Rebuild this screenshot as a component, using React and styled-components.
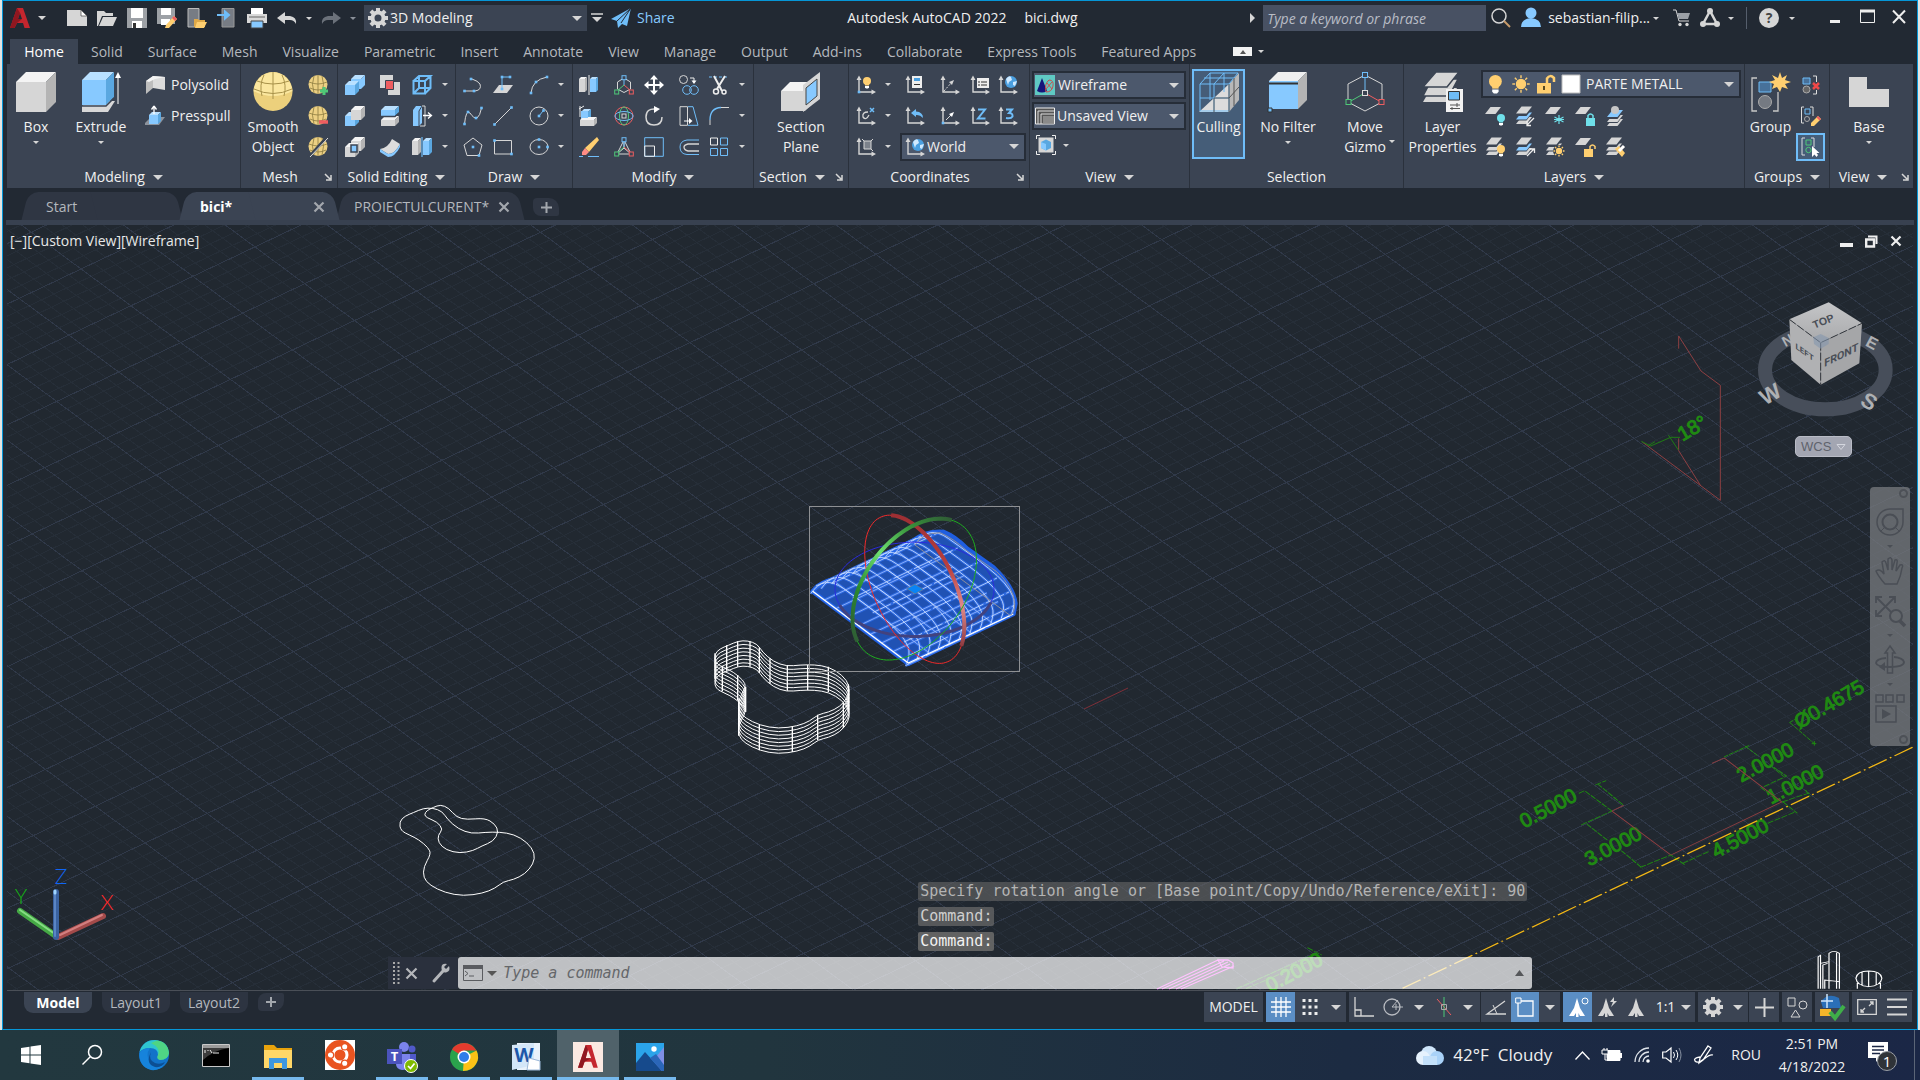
import React from "react";
import styled, { createGlobalStyle, css } from "styled-components";

const C = {
  frame: "#0696d7",
  bg: "#222933",
  panel: "#3b4453",
  field: "#4c586c",
  line: "#262d38",
  text: "#f0f0f0",
  dim: "#b4b8be",
  grey: "#d6d6d6",
  blue: "#87c9ff",
  sky: "#6fbdf8",
  gold: "#ffcf70",
  red: "#ee5d60",
  green: "#4fc878",
  teal: "#6fe0ea",
};

const Global = createGlobalStyle`
  * { box-sizing: border-box; }
  body { margin: 0; background: #e4e5e3; }
  body, button, input, select {
    font-family: "Open Sans", "Noto Sans", sans-serif;
    font-size: 14px;
    line-height: 20px;
    color: ${C.text};
  }
  button, select, input { border: 0; background: none; padding: 0; margin: 0; outline: 0; }
  svg { display: block; flex: none; overflow: visible; }
`;

/* ---------- shared parts ---------- */

const Desktop = styled.div`
  min-height: 100vh;
  display: flex;
  flex-direction: column;
`;
const Window = styled.main`
  flex: 1;
  display: flex;
  flex-direction: column;
  margin: 0 2px;
  border: 1px solid ${C.frame};
  background: ${C.bg};
`;
const Arrow = styled.i`
  flex: none;
  width: 0;
  height: 0;
  border: ${(p) => p.$s || 4}px solid transparent;
  border-top-color: ${(p) => p.$c || C.grey};
  border-bottom: 0;
`;
const Spacer = styled.div`
  flex: 1;
`;
const ArrowButton = styled.button.attrs({ type: "button" })`
  display: flex;
  align-items: center;
  justify-content: center;
  width: ${(p) => p.$w || 20}px;
  height: 20px;
`;
const IconButton = styled.button.attrs({ type: "button" })`
  display: flex;
  align-items: center;
  justify-content: center;
  width: ${(p) => p.$w || 20}px;
  height: ${(p) => p.$h || 20}px;
  ${(p) => p.$on && css`
    border: 2px solid ${C.sky};
    background: #455d78;
  `}
`;
const Drop = ({ label, w, s, c }) => (
  <ArrowButton $w={w} aria-label={label}><Arrow $s={s} $c={c} /></ArrowButton>
);

const Field = styled.label`
  display: flex;
  align-items: center;
  gap: ${(p) => p.$gap || 3}px;
  height: ${(p) => p.$h || 28}px;
  width: ${(p) => p.$w};
  padding: 0 5px 0 ${(p) => p.$pad || 3}px;
  background: ${(p) => (p.$flat ? C.panel : C.field)};
  border: ${(p) => (p.$flat ? 0 : 2)}px solid ${C.line};
`;
const Select = styled.select`
  flex: 1;
  min-width: 0;
  appearance: none;
  color: ${C.text};
`;
const Choice = ({ label, value, children, ...rest }) => (
  <Field {...rest}>
    {children}
    <Select aria-label={label} defaultValue={value}><option>{value}</option></Select>
    <Arrow $s={5} />
  </Field>
);

/* ---------- icons ---------- */

const Ic = ({ s = 20, v = s, w, h, children }) => (
  <svg width={w || s} height={h || s} viewBox={w ? `0 0 ${w} ${h}` : `0 0 ${v} ${v}`} fill="none" aria-hidden="true">{children}</svg>
);
const Dot = ({ x, y, c = C.sky, r = 1.3 }) => <rect x={x - r} y={y - r} width={2 * r} height={2 * r} fill={c} />;
const Axes = () => (
  <g stroke={C.grey} fill={C.grey}>
    <path d="M3 3V17H17" fill="none" strokeWidth="1.4" />
    <path d="M0.5 5L3 0.5L5.5 5ZM15.5 14.5L20 17L15.5 19.5Z" stroke="none" />
  </g>
);
const Layer = ({ x = 0, y = 0, c = C.grey }) => <path transform={`translate(${x} ${y})`} d="M5.5 0H16L10.500 7H0Z" fill={c} />;
const Stack = ({ hi }) => (
  <g>
    <Layer y={11} x={1} c={C.grey} /><Layer y={7.500} x={1} c={C.panel} />
    <Layer y={6.500} x={1} c={hi || C.grey} /><Layer y={3} x={1} c={C.panel} />
    <Layer y={0.5} x={1} />
  </g>
);
const Globe = ({ x = 13, y = 7, r = 6 }) => (
  <g>
    <circle cx={x} cy={y} r={r} fill="#4a9fe0" />
    <path d={`M${x - 5} ${y - 3}q3 -4 5 -2l1 3l-3 2l-1 3zM${x + 2} ${y}l4 -1l-2 5l-2 -1z`} fill="#cfe9ff" />
  </g>
);
const Bulb = ({ x = 0, y = 0, c = C.gold }) => (
  <g transform={`translate(${x} ${y})`}>
    <circle cx="4" cy="4" r="4" fill={c} /><path d="M2 7H6V8.500H2Z" fill={c} /><path d="M2 9H6V10.500L5 11.500H3L2 10.500Z" fill="#fff" />
  </g>
);
const Sun = ({ x, y, r = 3.500 }) => (
  <g stroke={C.gold} strokeWidth="1.4">
    <circle cx={x} cy={y} r={r} fill={C.gold} />
    {[0, 45, 90, 135, 180, 225, 270, 315].map((a) => (
      <path key={a} transform={`rotate(${a} ${x} ${y})`} d={`M${x + r + 1.5} ${y}h${r * 0.6}`} />
    ))}
  </g>
);
const Egg = ({ children }) => (
  <Ic>
    <ellipse cx="10" cy="9.500" rx="9.500" ry="9.500" fill="#ecd083" />
    <path d="M1 7Q10 11 19 7M2 13Q10 17 18 13M10 0V19M6 1Q3 9 6 18M14 1Q17 9 14 18" stroke="#8a7a3f" strokeWidth="0.8" />
    {children}
  </Ic>
);
const Gizmo = ({ tri }) => (
  <Ic>
    {tri ? <path d="M10 3L3 17H17ZM10 3V11L3 17M10 11L17 17" stroke={C.grey} /> : <path d="M10 3L3.500 7V14L10 17.500L16.500 14V7Z" stroke={C.grey} />}
    <path d="M10 4V10" stroke={C.sky} /><path d="M10 10L3 16" stroke={C.green} /><path d="M10 10L17 16" stroke={C.red} />
    <rect x="8" y="0.700" width="4" height="4" stroke={C.sky} fill={C.panel} />
    <rect x="0.700" y="15" width="4" height="4" stroke={C.green} fill={C.panel} />
    <rect x="15.300" y="15" width="4" height="4" stroke={C.red} fill={C.panel} />
  </Ic>
);
const Cube3 = ({ f = C.blue, t = "#b9e0ff", r = "#5aa7e0", x = 0, y = 0, w = 14, h = 12, d = 4 }) => (
  <g transform={`translate(${x} ${y})`}>
    <path d={`M0 ${d}H${w}V${d + h}H0Z`} fill={f} />
    <path d={`M0 ${d}L${d} 0H${w + d}L${w} ${d}Z`} fill={t} />
    <path d={`M${w} ${d}L${w + d} 0V${h}L${w} ${d + h}Z`} fill={r} />
  </g>
);
const white3 = { f: "#d6d6d6", t: "#f4f4f4", r: "#b4b4b4" };

const I = {
  polysolid: <Ic><path d="M1 6L8 1V13L1 19Z" fill="#bdbdbd" /><path d="M8 1L20 2V15L8 13Z" fill="#dcdcdc" /><path d="M1 6L8 1L20 2L10 4L4 7Z" fill="#f4f4f4" /></Ic>,
  presspull: <Ic><path d="M0 17L6 11H20L14 19H0Z" fill="#8d939c" /><Cube3 x={4} y={6} w={9} h={9} d={3} /><path d="M9 8V1M9 0L6.500 3.500M9 0L11.500 3.500" stroke="#fff" strokeWidth="1.3" /></Ic>,
  eggPlus: <Egg><path d="M12 16H20M16 12V20" stroke={C.green} strokeWidth="3" /></Egg>,
  eggMinus: <Egg><path d="M11 16H20" stroke={C.red} strokeWidth="3.500" /></Egg>,
  eggCut: <Egg><path d="M19 0L1 20" stroke="#3b4453" strokeWidth="3" /><path d="M20 1L2 20" stroke="#ddd" /></Egg>,
  union: <Ic><Cube3 x={6} y={0} w={10} h={10} r="#87c9ff" /><Cube3 x={0} y={6} w={10} h={10} /></Ic>,
  subtract: <Ic><Cube3 x={0} y={6} w={10} h={10} /><Cube3 x={6} y={0} w={10} h={10} {...white3} /></Ic>,
  intersect: <Ic><Cube3 x={6} y={0} w={10} h={10} {...white3} /><Cube3 x={0} y={6} w={10} h={10} {...white3} /><path d="M6 8H12V15H6Z" fill={C.blue} stroke={C.panel} strokeWidth="1.500" /></Ic>,
  interfere: <Ic><path d="M0 0H13V13H0Z" fill={C.grey} /><path d="M8 7H20V20H8Z" fill={C.grey} /><path d="M5.500 5.500H13.500V14.500H5.500Z" fill={C.red} stroke={C.panel} /></Ic>,
  slice: <Ic><Cube3 x={1} y={0} w={14} h={6} /><Cube3 x={1} y={10} w={14} h={6} {...white3} /><path d="M1 10.500H15L19 7" stroke={C.panel} strokeWidth="1.300" /></Ic>,
  thicken: <Ic><path d="M0 12Q8 11 12 2L20 7Q15 17 8 17Z" fill="#dcdcdc" /><path d="M0 12L8 17V20L0 15ZM8 17Q15 17 20 7V10Q15 20 8 20Z" fill={C.blue} /></Ic>,
  edges: <Ic><path d="M1.500 6H13V18.500H1.500ZM1.500 6L7 1H18.500L13 6M18.500 1V13L13 18.500M7 1V13H18M7 13L2 18" stroke={C.sky} strokeWidth="2" /></Ic>,
  taper: <Ic><path d="M1 4L4 0H10V17L7 20H1Z" fill={C.blue} /><path d="M7 5V20M7 5L10 0" stroke={C.panel} /><path d="M10 0H13V20H8" stroke={C.grey} /><path d="M11 9.500H19M16 6.500L19.500 9.500L16 12.500" stroke="#fff" strokeWidth="1.3" /></Ic>,
  shell: <Ic><Cube3 x={0} y={1} w={6} h={14} d={3} {...white3} /><Cube3 x={11} y={1} w={6} h={14} d={3} /><path d="M10 0V20" stroke={C.sky} strokeWidth="1.200" /></Ic>,
  polyline: <Ic><path d="M1 16H12Q19 15 17 9Q15 6 9 4" stroke={C.grey} /><Dot x={1.500} y={16} /><Dot x={11} y={16} /><Dot x={8} y={4} /></Ic>,
  path3d: <Ic><path d="M6 10H20L14 18H0Z" fill={C.grey} /><path d="M9 14V2H16" stroke={C.sky} /><Dot x={9} y={14} /><Dot x={9} y={2} /><Dot x={17} y={2} /></Ic>,
  arc: <Ic><path d="M2 18Q3 5 18 2" stroke={C.grey} /><Dot x={2} y={18} /><Dot x={7} y={7} /><Dot x={18} y={2} /></Ic>,
  spline: <Ic><path d="M1.500 18Q3 3 7 7Q11 13 14 12Q17 10 18.500 2" stroke={C.grey} /><Dot x={1.500} y={18} /><Dot x={5} y={6} /><Dot x={13} y={12} /><Dot x={18.500} y={2} /></Ic>,
  line: <Ic><path d="M1.500 18.500L18.500 1.500" stroke={C.grey} /><Dot x={1.500} y={18.500} /><Dot x={18.500} y={1.500} /></Ic>,
  circle: <Ic><circle cx="10" cy="10" r="9" stroke={C.grey} /><path d="M10 10L14 5" stroke={C.sky} /><Dot x={10} y={10} /><Dot x={14.500} y={4.500} /></Ic>,
  polygon: <Ic><path d="M10 1L19 8L16 18.500H4L1 8Z" stroke={C.grey} /><Dot x={10} y={10} /><Dot x={16} y={18.500} /></Ic>,
  rect: <Ic><path d="M1.500 3.500H18.500V17H1.500Z" stroke={C.grey} /><Dot x={1.500} y={3.500} /><Dot x={18.500} y={17} /></Ic>,
  ellipse: <Ic><ellipse cx="10" cy="10" rx="9" ry="7.500" stroke={C.grey} /><Dot x={10} y={10} /><Dot x={18.500} y={10} /><Dot x={10} y={2.500} /></Ic>,
  mirror3d: <Ic><Cube3 x={0} y={2} w={6} h={13} d={2} {...white3} /><Cube3 x={11} y={2} w={6} h={13} d={2} /><path d="M10 0V20" stroke="#eee" /></Ic>,
  align3d: <Ic><Cube3 x={2} y={3} w={7} h={8} d={3} /><Cube3 x={1} y={11} w={14} h={6} d={3} {...white3} /><path d="M2 5H9V12H2Z" fill={C.blue} /><path d="M1 11V0M0 3L5 0" stroke="#eee" /></Ic>,
  erase: <Ic><path d="M18 0L20 3L10 15L6 11Z" fill={C.gold} /><path d="M6 11L10 15L7 18H3L3 15Z" fill="#ff8d85" /><path d="M0 19.500H4M9 19.500H20" stroke={C.sky} /></Ic>,
  sphere: <Ic><circle cx="10" cy="10" r="9" stroke={C.red} /><ellipse cx="10" cy="10" rx="4.500" ry="9" stroke={C.green} /><ellipse cx="10" cy="10" rx="9" ry="4.500" stroke={C.sky} /><rect x="8" y="8" width="4" height="4" stroke={C.grey} /></Ic>,
  move: <Ic><path d="M10 2V18M2 10H18" stroke="#fff" strokeWidth="2" /><path d="M10 0L6 4.500H14ZM10 20L6 15.500H14ZM0 10L4.500 6V14ZM20 10L15.500 6V14Z" fill="#fff" /></Ic>,
  rotate: <Ic><path d="M12 3Q2 2 2 11Q2 19 10 19Q18 19 18 11" stroke={C.grey} strokeWidth="1.500" /><path d="M10 0L16 3L10 7Z" fill="#fff" /></Ic>,
  scale: <Ic><path d="M0.700 0.700H19.300V19.300H0.700Z" stroke={C.sky} /><path d="M0.700 9H10.500V19.300H0.700Z" stroke="#eee" /></Ic>,
  copy: <Ic><circle cx="4.500" cy="4.500" r="4" stroke={C.grey} /><circle cx="8" cy="15" r="4.300" stroke={C.sky} /><circle cx="15" cy="15" r="4.300" stroke={C.sky} /><path d="M11 3H15V6" stroke="#eee" /><path d="M12.500 5.500H17.500L15 9Z" fill="#fff" /></Ic>,
  stretch: <Ic><path d="M1 0.700H8.500V19.300H1Z" stroke={C.grey} /><path d="M9 0.700H14L19 19.300H9" stroke={C.sky} /><path d="M5 15H11" stroke="#fff" /><path d="M10 12L13.500 15L10 18Z" fill="#fff" /></Ic>,
  offset: <Ic><path d="M20 3H8Q1 4 1 10Q1 17 8 17.500H20" stroke={C.sky} /><path d="M20 7H9Q5 8 5 10Q5 13 9 14H20" stroke={C.grey} strokeWidth="1.300" /></Ic>,
  trim: <Ic><path d="M0 2H20" stroke={C.sky} strokeDasharray="3 2" /><path d="M5 1L13 16M16 1L8 14" stroke="#eee" strokeWidth="2" /><circle cx="7" cy="16.500" r="2.500" stroke="#eee" strokeWidth="1.500" /><circle cx="15" cy="17" r="2" stroke="#eee" strokeWidth="1.500" /></Ic>,
  fillet: <Ic><path d="M1 19V14" stroke={C.grey} /><path d="M1 14Q1 2 12 1.500" stroke={C.sky} strokeWidth="1.300" /><path d="M12 1.500H20" stroke={C.grey} /></Ic>,
  array: <Ic><g stroke={C.sky}><path d="M11.500 1H18.500V8H11.500ZM1.500 11.500H8.500V18.500H1.500ZM11.500 11.500H18.500V18.500H11.500Z" /><path d="M1.500 1H8.500V8H1.500Z" stroke="#eee" /></g></Ic>,
  ucsBulb: <Ic><Axes /><Bulb x={7} y={2} /><Dot x={3} y={17} /></Ic>,
  ucsRot: <Ic><Axes /><path d="M12 6Q6 6 7 11Q10 15 13 9" stroke={C.grey} strokeWidth="1.300" /><path d="M14 2L18 6M18 2L14 6" stroke={C.sky} strokeWidth="1.500" /></Ic>,
  ucsFace: <Ic><Axes /><path d="M8 4H15V12H8Z" fill="#7c828b" stroke={C.grey} /><path d="M6 2L8 4M17 2L15 4M17 14L15 12" stroke={C.grey} /></Ic>,
  ucsPanel: <Ic><Axes /><path d="M7 1H17V13H7Z" fill="#eee" /><path d="M9 3H15V6H9Z" fill="#4a9fe0" /><path d="M9 9.500H15" stroke="#333" /></Ic>,
  ucsVec: <Ic><Axes /><path d="M4 16L12 7" stroke={C.grey} strokeDasharray="2 1.500" /><path d="M14 5L9 7L12 10Z" fill={C.grey} /></Ic>,
  ucsVec2: <Ic><Axes /><Dot x={3} y={17} /><path d="M6 14L12 8" stroke={C.grey} /><path d="M14 6L9 8L12 11Z" fill="#fff" /></Ic>,
  ucsList: <Ic><Axes /><path d="M7 3H19V13H7Z" fill="#eee" /><path d="M8 7H10M11 7H17M8 10H10M11 10H17" stroke="#333" /></Ic>,
  ucsGlobe: <Ic><Axes /><Globe /></Ic>,
  ucsPrev: <Ic><Axes /><path d="M6 7L11 3V5.500Q18 6 18 12Q15 8.500 11 9V11Z" fill={C.sky} /></Ic>,
  ucsZ: <Ic><Axes /><path d="M8 3.500H15L8 12.500H15.500" stroke={C.sky} strokeWidth="2" /></Ic>,
  ucs3: <Ic><Axes /><path d="M8 3.500H14L11 7Q15 7 14.500 10.500Q13 13 8 12" stroke={C.sky} strokeWidth="2" /></Ic>,
  world: <Ic><Axes /><Globe x={13} y={8} /></Ic>,
  wire: <Ic><path d="M0 0H20V20H0Z" fill="#5fc9c3" /><path d="M7 3L12 16Q7 19 2 16Z" fill="#15157a" /><path d="M11 17Q9 9 14 5Q19 5 18 11Q17 17 11 17M12 8L17 14M17 7L11 14" stroke="#c85050" /></Ic>,
  unsaved: <Ic><path d="M0.500 2H19.500V18H0.500Z" stroke="#eee" fill="#555" /><path d="M3 18V5H19M6 18V8H19" stroke="#ddd" /><path d="M8 10H19V17.500H8Z" fill="#8a8a8a" /></Ic>,
  viewCube: <Ic><path d="M2.500 2.500H17.500V17.500H2.500Z" fill={C.grey} /><path d="M0.500 4V0.500H4M16 0.500H19.500V4M19.500 16V19.500H16M4 19.500H0.500V16" stroke="#eee" /><path d="M10 4.500L15 7V13L10 15.500L5 13V7Z" fill="#5aa7e0" /><path d="M5 7L10 9V15.500L5 13Z" fill={C.blue} /></Ic>,
  lyOff: <Ic><Layer y={1} /><Bulb x={12} y={8} c={C.teal} /></Ic>,
  lyIso: <Ic><Stack hi={C.blue} /><path d="M19 12L12 19M12 15V19.500H16" stroke="#eee" strokeWidth="1.300" /></Ic>,
  lyFreeze: <Ic><Layer y={1} /><path d="M14 9V18M9.500 11L18.500 16M18.500 11L9.500 16M9 13.500H19" stroke={C.teal} strokeWidth="1.200" /></Ic>,
  lyLock: <Ic><Layer y={1} /><path d="M11 12H20V20H11Z" fill={C.teal} /><path d="M13 12V9.500Q15.500 6.500 18 9.500V12" stroke={C.teal} strokeWidth="1.500" /></Ic>,
  lyCur: <Ic><Layer x={2} y={13} /><Layer x={2} y={10} c={C.panel} /><Layer x={2} y={9} /><Layer x={2} y={6} c={C.panel} /><Layer x={2} y={4} c={C.blue} /><circle cx="10" cy="4" r="4" fill="#c6c6c6" /></Ic>,
  lyOn: <Ic><Stack /><Bulb x={12} y={8} /></Ic>,
  lyUniso: <Ic><Stack hi={C.blue} /><path d="M12 19L19 12M15 12H19.500V16" stroke="#eee" strokeWidth="1.300" /></Ic>,
  lyThaw: <Ic><Stack /><circle cx="14" cy="14" r="6" fill={C.panel} /><Sun x={14} y={14} r={2.500} /></Ic>,
  lyUnlock: <Ic><Layer y={1} /><path d="M9 12H18V20H9Z" fill={C.gold} /><path d="M15 12V9.500Q17.500 6.500 20 9.500V12" stroke={C.gold} strokeWidth="1.500" /></Ic>,
  lyMatch: <Ic><Stack /><path d="M10 12L14 9L20 16L17 20Z" fill={C.gold} /><path d="M14 14L19 9" stroke="#fff" strokeWidth="3" /></Ic>,
  bulb: <Ic><g transform="translate(3 1) scale(1.600)"><Bulb /></g></Ic>,
  sun: <Ic><Sun x={10} y={10} r={4.500} /></Ic>,
  unlock: <Ic><path d="M1 9H15V19.500H1Z" fill={C.gold} /><path d="M11 9V4.500Q14 0 18 4V8" stroke={C.gold} strokeWidth="2.500" /><path d="M8 12V16" stroke="#5a4a20" strokeWidth="2" /></Ic>,
  swatch: <Ic><path d="M1 1H19V19H1Z" fill="#fff" stroke="#bbb" /></Ic>,
  ungroup: <Ic><path d="M2 3H9V9H2Z" stroke={C.sky} fill="#48719a" /><circle cx="5.500" cy="14.500" r="3.500" stroke="#aaa" fill="#666" /><path d="M12 1H15.500V7M15.500 15V19H12" stroke="#ddd" /><path d="M12 8L18 14M18 8L12 14" stroke="#f04848" strokeWidth="2.500" /></Ic>,
  groupEdit: <Ic><path d="M3 1H0.500V17H3M9 1H12V10" stroke="#ddd" /><path d="M4 3H9V8H4Z" stroke={C.sky} /><circle cx="6" cy="13" r="2.500" stroke="#aaa" /><path d="M17 10L20 13L13 20L10 20L10 17Z" fill={C.gold} /><path d="M17 10L20 13L18.500 14.500L15.500 11.500Z" fill={C.red} /></Ic>,
  groupSel: <Ic><path d="M4 1H1V18H4M10 1H13V10" stroke="#ddd" /><path d="M5 3H10V8H5Z" stroke={C.green} /><circle cx="7.500" cy="13" r="2.700" stroke={C.green} /><path d="M11 9V20L13.500 17.500L15.500 20L17 18L15.500 16H18.500Z" fill="#fff" /></Ic>,
};

const Big = {
  box: <Ic s={40}><Cube3 w={30} h={30} d={10} {...white3} /></Ic>,
  extrude: <Ic s={40}><path d="M1 34L8 29H34L27 40H1Z" fill="#d8d8d8" /><Cube3 x={1} w={24} h={25} d={8} /><path d="M1 34H25L33 26" stroke={C.panel} strokeWidth="1.500" /><path d="M37 32V3" stroke="#fff" /><path d="M37 0L34 6H40Z" fill="#fff" /></Ic>,
  egg: <Ic s={40}><ellipse cx="20" cy="19.500" rx="19.500" ry="19.500" fill="#ecd07c" /><path d="M0.500 19Q3 2 20 0Q37 2 39.500 19Q30 24 20 24Q10 24 0.500 19Z" fill="#fbe79f" /><path d="M1 17Q20 26 39 17M4 9Q20 15 36 9M20 0V27M11 3Q6 13 9 24M29 3Q34 13 31 24" stroke="#a8924a" /></Ic>,
  section: <Ic s={40}><Cube3 x={0} y={10} w={24} h={20} d={9} {...white3} /><path d="M22 13L39 0V27L22 40Z" fill={C.grey} /><path d="M25 16L36 7V24L25 33Z" fill={C.blue} stroke="#444" /></Ic>,
  culling: <Ic s={40}><path d="M0 40L30 12V40Z" fill="#dcdcdc" /><path d="M30 12L40 1V28L30 40Z" fill="#b8b8b8" /><path d="M1 12H30V39H1ZM1 12L11 1H39L30 12M11 1V28M1 26H30M15 12V39M15 12L25 1M25 1V20M5 6H35" stroke={C.sky} /><path d="M15 26V40M15 26H30M30 12V40M30 26L40 15M35 6V34" stroke="#555" /></Ic>,
  filter: <Ic s={40}><Cube3 x={1} y={0} w={29} h={28} d={9} t="#efefef" r="#b4b4b4" f={C.blue} /><path d="M1 11.500H30" stroke="#333" strokeWidth="2" /><path d="M0 36H4V40H0Z" fill={C.sky} stroke="#333" /></Ic>,
  gizmo: <Ic s={40}><path d="M20 3L37 12V30L20 39L3 30V12Z" stroke={C.grey} /><path d="M20 4V20" stroke={C.sky} /><path d="M20 21L4 30" stroke={C.green} /><path d="M20 21L36 30" stroke={C.red} /><g fill={C.panel}><rect x="17.500" y="0.500" width="5" height="5" stroke={C.sky} /><rect x="17.500" y="18.500" width="5" height="5" stroke="#ddd" /><rect x="1" y="27.500" width="5" height="5" stroke={C.green} /><rect x="34" y="27.500" width="5" height="5" stroke={C.red} /></g></Ic>,
  layers: <Ic s={40}><g fill={C.grey}><path d="M8 16H34L26 30H0Z" /><path d="M9 7H35L26 24H0Z" stroke={C.panel} strokeWidth="1.500" /><path d="M13 0H36L24 15H0Z" stroke={C.panel} strokeWidth="1.500" /></g><path d="M23 17H40V40H23Z" fill="#f2f2f2" /><path d="M25.500 19.500H36.500V28H25.500Z" fill={C.sky} stroke="#333" /><path d="M27 33H37M27 36.500H37M34 31V35M29 35V38" stroke="#555" /></Ic>,
  group: <Ic s={40}><path d="M6 6H1V39H6M22 39H27V20" stroke="#c8c8c8" strokeWidth="1.300" /><path d="M8 10H20V20H8Z" fill="#47719a" stroke={C.sky} /><circle cx="14" cy="30" r="6.500" fill="#757a82" stroke="#aaa" /><path d="M29 0L31 6L36 3L34 8L40 10L34 12L37 17L31 15L29 20L26 15L21 17L23 12L18 10L24 8L21 3L27 6Z" fill={C.gold} /></Ic>,
  base: <Ic s={40}><path d="M0 5H18V17H40V35H0Z" fill={C.grey} /></Ic>,
};

/* ---------- title bar ---------- */

const TitleBar = styled.header`
  display: flex;
  align-items: center;
  height: 38px;
  padding: 0 8px 4px 7px;
`;
const Cluster = styled.div`
  display: flex;
  align-items: center;
  gap: ${(p) => p.$gap || 0}px;
  margin-left: ${(p) => p.$ml || 0}px;
`;
const AppTitle = styled.h1`
  flex: 1;
  margin: 0;
  display: flex;
  justify-content: center;
  gap: 18px;
  font-size: 14px;
  font-weight: 400;
`;
const ShareLink = styled.a`
  display: flex;
  align-items: center;
  gap: 6px;
  margin-left: 8px;
  color: ${C.blue};
  text-decoration: none;
`;
const SearchBox = styled.input`
  width: 223px;
  height: 26px;
  padding: 0 4px;
  background: #485163;
  color: ${C.text};
  &::placeholder { color: #b9bdc6; font-style: italic; font-size: 14px; opacity: 1; }
`;
const Divider = styled.i`
  width: 1px;
  height: 22px;
  background: #555e6c;
`;
const UserButton = styled.button.attrs({ type: "button" })`
  display: flex;
  align-items: center;
  gap: 7px;
`;

const LogoA = ({ s = 20 }) => (
  <svg width={s} height={s} viewBox="0 0 20 20" aria-hidden="true">
    <path d="M7 0H13L20 20H14.500L13 15H7L4.500 20H0Z M10 5L8 11H12Z" fill="#c4262e" fillRule="evenodd" />
    <path d="M7 0L0 20H4.500L7 15L12 11H8L10 5Z" fill="#8f1720" />
  </svg>
);
const Q = {
  new: <Ic><path d="M0 2H14L20 8V18H0Z" fill={C.grey} /><path d="M14 2V8H20Z" fill="#fff" stroke="#444" strokeWidth="0.700" /></Ic>,
  open: <Ic><path d="M0 3H7L9 5H16V8H5L1 18H0Z" fill={C.grey} /><path d="M6 9H20L16 18H2Z" fill={C.grey} /></Ic>,
  save: <Ic><path d="M0 0H20V20H0Z" fill="#9da1a6" /><path d="M4 0H16V10H4ZM5 13H15V20H5Z" fill="#fff" /><path d="M6 15H9V20H6Z" fill="#333" /></Ic>,
  saveAs: <Ic><path d="M0 0H18V16H0Z" fill="#9da1a6" /><path d="M4 0H14V7H4ZM4 11H13V17H4Z" fill="#fff" /><path d="M17 8L20 11L12 20L8 20L9 17Z" fill={C.gold} /><path d="M17 8L20 11L18 13L15 10Z" fill={C.red} /></Ic>,
  mobOpen: <Ic><path d="M1 0.500H12V19H1Z" fill="#777c84" stroke="#bbb" /><path d="M7 11H11L12 12H18V19H7Z" fill="#e0a948" /><path d="M10 14H20L17 20H8Z" fill={C.gold} /></Ic>,
  mobSave: <Ic><path d="M5 0.500H17V19H5Z" fill="#777c84" stroke="#999" /><path d="M0 7H8M8 3.500L12 7L8 10.500Z" stroke={C.sky} fill={C.sky} strokeWidth="2" /></Ic>,
  print: <Ic><path d="M4 0H16V6H4Z" fill="#fff" /><path d="M0 6H20V15H0Z" fill="#d8d8d8" /><path d="M2 9H18" stroke="#666" /><path d="M4 13H16V20H4Z" fill={C.blue} stroke="#444" /></Ic>,
  undo: <Ic><path d="M0 10L8 4V8H13Q20 9 19 16Q17 12 13 12H8V16Z" fill={C.grey} /></Ic>,
  redo: <Ic><path d="M20 10L12 4V8H7Q0 9 1 16Q3 12 7 12H12V16Z" fill="#6b717a" /></Ic>,
};
const Gear = ({ s = 20, c = C.grey, hole = C.panel }) => (
  <svg width={s} height={s} viewBox="0 0 20 20" aria-hidden="true">
    <circle cx="10" cy="10" r="5.500" stroke={c} strokeWidth="4" fill={hole} />
    {[0, 45, 90, 135, 180, 225, 270, 315].map((a) => <path key={a} transform={`rotate(${a} 10 10)`} d="M8 0H12V4H8Z" fill={c} />)}
  </svg>
);

const Title = () => (
  <TitleBar>
    <IconButton aria-label="Application menu"><LogoA /></IconButton>
    <Drop label="Application menu options" w={24} />
    <Cluster $gap={10} $ml={13}>
      {["new", "open", "save", "saveAs", "mobOpen", "mobSave", "print", "undo"].map((k) => <IconButton key={k} aria-label={k}>{Q[k]}</IconButton>)}
    </Cluster>
    <Drop label="Undo list" w={24} s={3} />
    <IconButton aria-label="redo">{Q.redo}</IconButton>
    <Drop label="Redo list" w={23} s={3} c="#8a9099" />
    <Choice label="Workspace" value="3D Modeling" $flat $h={26} $w="223px" $pad={4} $gap={2}><Gear /></Choice>
    <Cluster $ml={4}>
      <IconButton $w={12} aria-label="Customize toolbar"><Ic w={12} h={10}><path d="M0 1H12" stroke={C.grey} strokeWidth="1.500" /><path d="M1 4H11L6 9Z" fill={C.grey} /></Ic></IconButton>
      <ShareLink href="#share"><Ic><path d="M20 0L0 11L6 13L7 20L11 16L16 18Z" fill={C.sky} /><path d="M20 0L6 13M20 0L10 15" stroke={C.bg} /></Ic>Share</ShareLink>
    </Cluster>
    <AppTitle><span>Autodesk AutoCAD 2022</span><span>bici.dwg</span></AppTitle>
    <Cluster $gap={8}>
      <Ic w={5} h={10}><path d="M0 0L5 5L0 10Z" fill={C.grey} /></Ic>
      <SearchBox aria-label="Search" placeholder="Type a keyword or phrase" />
    </Cluster>
    <Cluster $ml={5} $gap={10}>
      <IconButton aria-label="Search help"><Ic><circle cx="8" cy="8" r="7" stroke={C.grey} strokeWidth="1.500" /><path d="M13 13L19 19" stroke="#c79a6a" strokeWidth="2" /></Ic></IconButton>
      <UserButton><Ic><circle cx="10" cy="5" r="5.500" fill={C.blue} /><path d="M0 19Q0 11 10 10Q20 11 20 19Z" fill={C.blue} /></Ic>sebastian-filip...</UserButton>
    </Cluster>
    <Drop label="Account menu" w={12} s={3} />
    <Cluster $ml={10}>
      <IconButton aria-label="App store"><Ic w={18} h={18}><path d="M0 1H3L6 12H16" stroke={C.grey} /><path d="M4 4H17L15 10H6Z" fill="#9a9fa6" /><circle cx="7" cy="15.500" r="1.700" fill={C.grey} /><circle cx="14" cy="15.500" r="1.700" fill={C.grey} /></Ic></IconButton>
    </Cluster>
    <Cluster $ml={8}>
      <IconButton aria-label="Autodesk services"><Ic><path d="M10 3L3 16H17Z" stroke={C.grey} strokeWidth="2.500" /><circle cx="10" cy="3" r="3" fill={C.grey} /><circle cx="3" cy="16" r="3" fill={C.grey} /><circle cx="17" cy="16" r="3" fill={C.grey} /></Ic></IconButton>
      <Drop label="Services menu" w={22} s={3} />
    </Cluster>
    <Cluster $ml={4} $gap={12}>
      <Divider />
      <IconButton aria-label="Help"><Ic><circle cx="10" cy="10" r="10" fill={C.grey} /><text x="10" y="15" fontSize="14" fontWeight="700" textAnchor="middle" fill="#444">?</text></Ic></IconButton>
    </Cluster>
    <Drop label="Help menu" w={26} s={3} />
    <Cluster $gap={12} $ml={20}>
      <IconButton aria-label="Minimize"><Ic w={10} h={16}><path d="M0 11.500H10" stroke="#eee" strokeWidth="3" /></Ic></IconButton>
      <IconButton aria-label="Maximize"><Ic w={15} h={16}><path d="M0.500 0V12.500H14.500V0" stroke="#eee" /><path d="M0 1H15" stroke="#eee" strokeWidth="3" /></Ic></IconButton>
      <IconButton aria-label="Close"><Ic w={14} h={16}><path d="M1 0.500L13 13M13 0.500L1 13" stroke="#eee" strokeWidth="2" /></Ic></IconButton>
    </Cluster>
  </TitleBar>
);

/* ---------- ribbon ---------- */

const TabRow = styled.nav`
  display: flex;
  align-items: center;
  gap: 1px;
  height: 25px;
  padding-left: 7px;
`;
const RibbonTab = styled.button.attrs({ type: "button" })`
  height: 25px;
  padding: 0 12px;
  color: ${(p) => (p.$on ? "#fff" : C.dim)};
  ${(p) => p.$on && css`
    width: 68px;
    background: ${C.panel};
  `}
`;
const CollapseButton = styled.button.attrs({ type: "button" })`
  width: 19px;
  height: 9px;
  margin-left: 24px;
  background: #f2f2f2;
  display: flex;
  align-items: center;
  justify-content: center;
`;
const Ribbon = styled.section`
  display: flex;
  margin: 0 4px;
  background: ${C.panel};
`;
const PanelBox = styled.section`
  flex: 0 0 ${(p) => p.$w}px;
  display: flex;
  flex-direction: column;
  border-right: ${(p) => (p.$last ? 0 : 1)}px solid #2a313c;
`;
const PanelBody = styled.div`
  display: flex;
  align-items: flex-start;
  height: 102px;
  padding: 5px 0 0 ${(p) => p.$pad || 0}px;
`;
const PanelTitle = styled.footer`
  display: flex;
  align-items: center;
  height: 22px;
`;
const PanelName = styled.button.attrs({ type: "button" })`
  flex: 1;
  display: flex;
  align-items: center;
  justify-content: center;
  gap: 8px;
  white-space: nowrap;
`;
const Launcher = styled.button.attrs({ type: "button" })`
  width: 18px;
  display: flex;
  justify-content: center;
`;
const Panel = ({ name, w, pad, menu, launch, last, children }) => (
  <PanelBox $w={w} $last={last}>
    <PanelBody $pad={pad}>{children}</PanelBody>
    <PanelTitle>
      <PanelName>{name}{menu && <Arrow $s={5} />}</PanelName>
      {launch && <Launcher aria-label={`${name} settings`}><Ic w={7} h={7}><path d="M0 0L5 5M6 1V6H1" stroke={C.grey} strokeWidth="1.500" /></Ic></Launcher>}
    </PanelTitle>
  </PanelBox>
);
const BigButton = styled.button.attrs({ type: "button" })`
  display: flex;
  flex-direction: column;
  align-items: center;
  gap: 5px;
  width: ${(p) => p.$w}px;
  height: 90px;
  padding-top: ${(p) => (p.$on ? 1 : 3)}px;
  white-space: nowrap;
  ${(p) => p.$on && css`
    border: 2px solid ${C.sky};
    background: #455d78;
    margin: 0 6px 0 2px;
  `}
`;
const BigLabel = styled.span`
  display: flex;
  flex-direction: column;
  align-items: center;
`;
const BigDrop = styled(Arrow)`
  margin-top: 4px;
`;
const BigTool = ({ icon, lines, drop, ...rest }) => (
  <BigButton {...rest}>
    {icon}
    <BigLabel>{lines.map((l) => <span key={l}>{l}</span>)}{drop && <BigDrop $s={3} />}</BigLabel>
  </BigButton>
);
const Side = styled.div`
  display: flex;
  align-items: flex-end;
  height: 74px;
  margin-left: -16px;
`;
const Tools = styled.div`
  display: grid;
  grid-template-columns: ${(p) => p.$cols};
  grid-auto-rows: 31px;
  align-items: center;
  margin-left: ${(p) => p.$ml || 0}px;
  justify-items: ${(p) => (p.$center ? "center" : "start")};
`;
const WideTool = styled.button.attrs({ type: "button" })`
  display: flex;
  align-items: center;
  gap: 6px;
`;
const SpanCell = styled.div`
  grid-column: span 4;
  justify-self: stretch;
`;
const Column = styled.div`
  display: flex;
  flex-direction: column;
  gap: ${(p) => (p.$tight ? 2 : 3)}px;
  padding-top: ${(p) => (p.$tight ? 1 : 2)}px;
`;
const tools = (names) => names.map((k, i) => (k === "v"
  ? <Drop key={i} label="More tools" s={3} />
  : <IconButton key={i} aria-label={k}>{I[k]}</IconButton>));

const tabNames = ["Home", "Solid", "Surface", "Mesh", "Visualize", "Parametric", "Insert", "Annotate", "View", "Manage", "Output", "Add-ins", "Collaborate", "Express Tools", "Featured Apps"];

const RibbonBar = () => (
  <>
    <TabRow>
      {tabNames.map((t, i) => <RibbonTab key={t} $on={i === 0}>{t}</RibbonTab>)}
      <CollapseButton aria-label="Collapse ribbon"><Ic w={6} h={4}><path d="M0 4L3 0L6 4Z" fill="#555" /></Ic></CollapseButton>
      <Drop label="Ribbon display" w={16} s={3} />
    </TabRow>
    <Ribbon>
      <Panel name="Modeling" w={234} menu>
        <BigTool $w={58} icon={Big.box} lines={["Box"]} drop />
        <BigTool $w={72} icon={Big.extrude} lines={["Extrude"]} drop />
        <Tools $cols="auto" $ml={8}>
          <WideTool>{I.polysolid}Polysolid</WideTool>
          <WideTool>{I.presspull}Presspull</WideTool>
        </Tools>
      </Panel>
      <Panel name="Mesh" w={97} launch>
        <BigTool $w={64} icon={Big.egg} lines={["Smooth", "Object"]} />
        <Tools $cols="20px" $ml={3}>{tools(["eggPlus", "eggMinus", "eggCut"])}</Tools>
      </Panel>
      <Panel name="Solid Editing" w={118} pad={7} menu>
        <Tools $cols="35px 32px 23px 20px">{tools(["union", "interfere", "edges", "v", "subtract", "slice", "taper", "v", "intersect", "thicken", "shell", "v"])}</Tools>
      </Panel>
      <Panel name="Draw" w={117} pad={7} menu>
        <Tools $cols="30px 36px 22px 20px">{tools(["polyline", "path3d", "arc", "v", "spline", "line", "circle", "v", "polygon", "rect", "ellipse", "v"])}</Tools>
      </Panel>
      <Panel name="Modify" w={181} pad={6} menu>
        <Tools $cols="35px 30px 35px 30px 23px 20px">
          {tools(["mirror3d"])}<IconButton aria-label="3D move"><Gizmo /></IconButton>{tools(["move", "copy", "trim", "v"])}
          {tools(["align3d", "sphere", "rotate", "stretch", "fillet", "v"])}
          {tools(["erase"])}<IconButton aria-label="3D scale"><Gizmo tri /></IconButton>{tools(["scale", "offset", "array", "v"])}
        </Tools>
      </Panel>
      <Panel name="Section" w={95} menu launch>
        <BigTool $w={94} icon={Big.section} lines={["Section", "Plane"]} />
      </Panel>
      <Panel name="Coordinates" w={181} pad={7} launch>
        <Tools $cols="20px 24px 30px 40px 20px 36px" $center>
          {tools(["ucsBulb", "v", "ucsPanel", "ucsVec", "ucsList", "ucsGlobe", "ucsRot", "v", "ucsPrev", "ucsVec2", "ucsZ", "ucs3", "ucsFace", "v"])}
          <SpanCell><Choice label="Coordinate system" value="World" $w="100%" $gap={2}>{I.world}</Choice></SpanCell>
        </Tools>
      </Panel>
      <Panel name="View" w={160} pad={2} menu>
        <Column>
          <Choice label="Visual style" value="Wireframe" $w="154px" $pad={1}>{I.wire}</Choice>
          <Choice label="Saved view" value="Unsaved View" $w="154px" $pad={1} $gap={2}>{I.unsaved}</Choice>
          <Cluster $ml={4}><IconButton $h={24} aria-label="View cube">{I.viewCube}</IconButton><Drop label="View options" s={3} /></Cluster>
        </Column>
      </Panel>
      <Panel name="Selection" w={214}>
        <BigTool $w={53} $on icon={Big.culling} lines={["Culling"]} />
        <BigTool $w={74} icon={Big.filter} lines={["No Filter"]} drop />
        <BigTool $w={80} icon={Big.gizmo} lines={["Move", "Gizmo"]} />
        <Side><Arrow $s={3} /></Side>
      </Panel>
      <Panel name="Layers" w={341} menu>
        <BigTool $w={77} icon={Big.layers} lines={["Layer", "Properties"]} />
        <Column $tight>
          <Choice label="Layer" value="PARTE METALL" $w="260px" $pad={3} $gap={5}>{I.bulb}{I.sun}{I.unlock}{I.swatch}</Choice>
          <Tools $cols="repeat(5, 30px)" $ml={4}>{tools(["lyOff", "lyIso", "lyFreeze", "lyLock", "lyCur", "lyOn", "lyUniso", "lyThaw", "lyUnlock", "lyMatch"])}</Tools>
        </Column>
      </Panel>
      <Panel name="Groups" w={85} menu>
        <BigTool $w={51} icon={Big.group} lines={["Group"]} />
        <Tools $cols="29px" $center>
          {tools(["ungroup", "groupEdit"])}
          <IconButton $w={29} $h={28} $on aria-label="Group selection">{I.groupSel}</IconButton>
        </Tools>
      </Panel>
      <Panel name="View" w={84} menu launch last>
        <BigTool $w={78} icon={Big.base} lines={["Base"]} drop />
      </Panel>
    </Ribbon>
  </>
);

/* ---------- file tabs ---------- */

const FileTabs = styled.nav`
  display: flex;
  align-items: flex-end;
  height: 32px;
  padding-left: 22px;
`;
const FileTab = styled.div`
  position: relative;
  isolation: isolate;
  display: flex;
  align-items: center;
  justify-content: space-between;
  width: ${(p) => p.$w}px;
  height: 28px;
  margin-right: 4px;
  padding: 2px ${(p) => p.$pr || 13}px 0 ${(p) => p.$pl || 20}px;
  z-index: ${(p) => (p.$on ? 1 : 0)};
  &::before, &::after {
    content: "";
    position: absolute;
    z-index: -1;
    top: 0;
    bottom: 0;
    left: 0;
    right: 45%;
    background: ${(p) => (p.$on ? C.panel : "#2f3643")};
    border-radius: 10px 0 0 0;
    transform: skewX(-14deg);
  }
  &::after {
    left: 45%;
    right: 0;
    border-radius: 0 10px 0 0;
    transform: skewX(14deg);
  }
`;
const TabName = styled.button.attrs({ type: "button" })`
  color: ${(p) => (p.$on ? "#fff" : C.dim)};
  font-weight: ${(p) => (p.$on ? 700 : 400)};
  white-space: nowrap;
`;
const AddTab = styled.button.attrs({ type: "button" })`
  display: flex;
  align-items: center;
  justify-content: center;
  width: 26px;
  height: 18px;
  margin: 0 0 4px 8px;
  background: #2f3643;
  border-radius: 4px 10px 2px 8px;
`;
const Rule = styled.div`
  height: 5px;
  margin: 0 3px;
  background: #384150;
`;
const X = ({ s = 12, c = "#a3a7ad" }) => <Ic w={s} h={s}><path d={`M1.500 1.500L${s - 1.500} ${s - 1.500}M${s - 1.500} 1.500L1.500 ${s - 1.500}`} stroke={c} strokeWidth="2.200" /></Ic>;
const Plus = ({ s = 11, c = "#a3a7ad", t = 2 }) => <Ic w={s} h={s}><path d={`M0 ${s / 2}H${s}M${s / 2} 0V${s}`} stroke={c} strokeWidth={t} /></Ic>;

/* ---------- drawing ---------- */

const Viewport = styled.section`
  position: relative;
  flex: 1;
  min-height: 700px;
  margin: 0 4px;
  overflow: hidden;
  background: #212830;
`;
const Canvas = styled.svg`
  position: absolute;
  inset: 0;
  width: 100%;
  height: 100%;
  font-family: "Liberation Sans", Arial, sans-serif;
`;
const ViewHead = styled.div`
  position: relative;
  display: flex;
  align-items: center;
  justify-content: space-between;
  padding: 6px 11px 0 3px;
`;
const ViewLabel = styled.button.attrs({ type: "button" })`
  color: #e8e8e8;
`;

const U = [49.8, 36.8];
const V = [62, -29.430];
const O = [616.7, 740];
const gridPath = (step, from, d, major) => {
  let out = "";
  for (let i = -220; i <= 220; i++) {
    if ((i % 5 === 0) !== major) continue;
    const x = from[0] + (step[0] * i) / 5;
    const y = from[1] + (step[1] * i) / 5;
    out += `M${(x - d[0] * 50).toFixed(1)} ${(y - d[1] * 50).toFixed(1)}L${(x + d[0] * 50).toFixed(1)} ${(y + d[1] * 50).toFixed(1)}`;
  }
  return out;
};
const minorGrid = gridPath(V, O, U, false) + gridPath(U, O, V, false);
const majorGrid = gridPath(V, O, U, true) + gridPath(U, O, V, true);

const smooth = (pts, closed) => {
  const mid = (a, b) => `${((a[0] + b[0]) / 2).toFixed(1)} ${((a[1] + b[1]) / 2).toFixed(1)}`;
  const n = pts.length;
  if (closed) {
    let d = `M${mid(pts[n - 1], pts[0])}`;
    pts.forEach((p, i) => { d += `Q${p[0]} ${p[1]} ${mid(p, pts[(i + 1) % n])}`; });
    return d + "Z";
  }
  let d = `M${pts[0].join(" ")}`;
  for (let i = 1; i < n - 1; i++) d += `Q${pts[i].join(" ")} ${i === n - 2 ? pts[n - 1].join(" ") : mid(pts[i], pts[i + 1])}`;
  return d;
};
const arc = (a, b, t0, t1) => {
  const out = [];
  for (let t = t0; t <= t1; t += 3) {
    const r = (t * Math.PI) / 180;
    out.push(`${(914.5 + a[0] * Math.cos(r) + b[0] * Math.sin(r)).toFixed(1)} ${(589.3 + a[1] * Math.cos(r) + b[1] * Math.sin(r)).toFixed(1)}`);
  }
  return "M" + out.join("L");
};
const Z = [0, -64.3];

const loop = [[58, 605], [75, 588], [100, 578], [130, 565], [158, 564], [187, 574], [202, 598], [235, 627], [275, 641], [315, 637], [358, 636], [402, 643], [442, 667], [465, 700], [460, 732], [435, 762], [400, 779], [370, 785], [345, 805], [308, 820], [250, 828], [195, 818], [150, 796], [130, 773], [131, 740], [153, 702], [145, 683], [115, 658], [90, 646], [62, 632]];
const smallLoop = [[133, 584], [140, 572], [160, 562], [182, 554], [206, 564], [230, 592], [260, 599], [315, 594], [345, 612], [356, 636], [340, 664], [305, 678], [280, 692], [240, 700], [198, 690], [175, 668], [174, 645], [189, 628], [172, 606], [140, 593]];
const posts = [[60, 602], [95, 578], [128, 566], [165, 566], [193, 585], [225, 617], [277, 638], [338, 637], [400, 642], [460, 695], [445, 750], [368, 786], [292, 822], [193, 817], [131, 773], [131, 740], [152, 702], [128, 667], [82, 640]];

const profile = [[92, 341], [112, 312], [160, 304], [222, 348], [282, 392], [340, 438], [376, 480], [392, 520], [380, 551]];
const saddleD = [315, -150];
const shift = (pts, k) => pts.map(([x, y]) => [x + saddleD[0] * k, y + saddleD[1] * k]);
const ribs = [0, 0.1, 0.2, 0.3, 0.4, 0.5, 0.6, 0.7, 0.8, 0.9, 1].map((k) => smooth(shift(profile, k))).join("");
const stringers = profile.slice(1).map(([x, y]) => `M${x - 4} ${y + 6}l${saddleD[0]} ${saddleD[1]}`).join("");
const base = [0.12, 0.24, 0.36, 0.48, 0.6, 0.72, 0.84].map((f) => `M${100 + 285 * f} ${334 + 215 * f}l${saddleD[0]} ${saddleD[1]}`).join("")
  + [0.2, 0.4, 0.6, 0.8].map((f) => `M${100 + saddleD[0] * f} ${334 + saddleD[1] * f}l285 215`).join("");

const Saddle = () => (
  <g>
    <g transform="translate(780 480) scale(0.333333)">
      <path d="M98 334Q120 305 165 297L400 182Q440 152 490 156Q525 170 560 205L640 262Q700 320 706 370L700 402L385 551Z" fill="#2052b4" stroke="#1f5ee0" strokeWidth="14" strokeLinejoin="round" />
      <g strokeWidth="9" stroke="#3474f2" opacity="0.700"><path d={ribs} /><path d={stringers} /><path d={base} /><path d="M98 334L385 549L700 402" /></g>
      <path d={base} stroke="#9dbcff" strokeWidth="3" opacity="0.800" />
      <g strokeWidth="3" stroke="#cfe0ff"><path d={ribs} opacity="0.850" /><path d={stringers} opacity="0.800" strokeDasharray="60 8" /><path d="M98 334L385 549L700 402" stroke="#fff" strokeWidth="4" /></g>
      <path d="M405 195Q425 160 480 158Q520 175 560 212L650 275Q700 320 704 370Q705 400 690 406L405 195" stroke="#8d8f9c" strokeWidth="3" />
      <path d="M380 326L405 313L430 328L405 342Z" fill="#0a84f5" stroke="#777" strokeWidth="2" />
    </g>
    <path d={arc(V, U, 0, 360)} stroke="#2a2ae0" />
    <path d={arc(V, U, 55, 200)} stroke="#42427e" strokeWidth="3" />
    <path d={arc(U, Z, 0, 360)} stroke="#f02a2a" />
    <path d={arc(U, Z, -20, 120)} stroke="url(#redArc)" strokeWidth="4" />
    <path d={arc(V, Z, 0, 360)} stroke="#1fae1f" />
    <path d={arc(V, Z, 53, 205)} stroke="url(#greenArc)" strokeWidth="4" />
  </g>
);

const Dim = ({ x, y, children, size = 20, a = -28 }) => (
  <text x={x} y={y} transform={`rotate(${a} ${x} ${y})`} textAnchor="middle" dominantBaseline="central" fontSize={size} fill="#1f8a12" stroke="#1f8a12" strokeWidth="1">{children}</text>
);

const Drawing = () => (
  <Canvas viewBox="7 225 1906 765" preserveAspectRatio="xMinYMin slice" fill="none">
    <defs>
      <linearGradient id="redArc" x1="0" y1="0" x2="0" y2="1"><stop offset="0" stopColor="#9e2f33" /><stop offset="0.400" stopColor="#b8403f" /><stop offset="0.700" stopColor="#e08a8a" /><stop offset="1" stopColor="#8f3a40" /></linearGradient>
      <linearGradient id="greenArc" x1="0" y1="1" x2="1" y2="0"><stop offset="0" stopColor="#2f5a35" /><stop offset="0.250" stopColor="#2a8a2e" /><stop offset="0.500" stopColor="#6fe070" /><stop offset="0.750" stopColor="#37933b" /><stop offset="1" stopColor="#2f5a35" /></linearGradient>
      <linearGradient id="cubeTop" x1="0" y1="0" x2="0" y2="1"><stop offset="0" stopColor="#c4c5c7" /><stop offset="1" stopColor="#a9aaac" /></linearGradient>
    </defs>
    <g shapeRendering="crispEdges">
      <path d={minorGrid} stroke="#262e38" />
      <path d={majorGrid} stroke="#303949" />
    </g>

    <g transform="translate(380 620) scale(0.333333)" stroke="#fff" strokeWidth="3">
      <path d={smooth(loop, true)} />
      <path d={smooth(smallLoop, true)} />
      <g transform="translate(945 -502)">
        {[0, 11, 22, 33, 44, 55, 66, 76].map((dy) => <path key={dy} d={smooth(loop, true)} transform={`translate(0 ${dy})`} strokeWidth="3" />)}
        <path d={posts.map(([x, y]) => `M${x} ${y}v76`).join("")} strokeWidth="4" />
      </g>
    </g>

    <Saddle />
    <path d="M809.500 506.500H1019.500V671.500H809.500Z" stroke="#8e9093" shapeRendering="crispEdges" />
    <path d="M1084 709L1128 688" stroke="#7e2f38" />

    <g transform="translate(1480 280) scale(0.333333)" strokeWidth="3">
      <path d="M596 206V168L663 273L721 316V661L487 486M596 475V512L662 617" stroke="#8e3f42" />
      <path d="M484 484L512 498L572 472H600M565 465L595 510M505 497L525 485" stroke="#1f7a14" />
      <path d="M928 1328L950 1315M930 1328L1003 1391M995 1391H1012M1003 1383V1397M732 1431L810 1395M795 1398L832 1426M875 1460L912 1490" stroke="#1f8a12" strokeDasharray="14 3" />
    </g>
    <Dim x={1692} y={428} size={20} a={-30}>18°</Dim>
    <Dim x={1829} y={704} size={20} a={-30}>Ø0.4675</Dim>
    <Dim x={1765} y={762}>2.0000</Dim>
    <Dim x={1795} y={784}>1.0000</Dim>
    <Dim x={1740} y={838}>4.5000</Dim>
    <Dim x={1613} y={846}>3.0000</Dim>
    <Dim x={1548} y={808}>0.5000</Dim>
    <Dim x={1294} y={972}>0.2000</Dim>
    <g transform="translate(1180 680) scale(0.472 0.333333)" strokeWidth="2.500">
      <path d="M1127 250L1153 234L1275 366L1040 525L915 393L940 376" stroke="#8e3f42" />
      <path d="M880 315L903 302M885 312L940 376M845 340L857 332L915 393M850 435L915 393M862 432L905 480M935 512L980 565M975 562L1040 525L1070 555M1065 550L1120 515M1245 430L1303 396M1278 366L1308 400M1275 366L1335 338M1325 330L1335 350M1237 320L1285 288L1258 262M1230 322L1262 355M270 803L300 825M120 926L290 820M140 926L300 828" stroke="#1f8a12" strokeDasharray="14 3" />
      <path d="M1552 202L470 926" stroke="#f5b915" strokeWidth="3.500" strokeDasharray="46 8 4 8" />
      <path d="M1352 926V830L1357 826V926M1362 926V855L1372 850M1375 926V820Q1385 808 1397 820V926M1391 926V818M1366 926V900L1397 905M1357 850L1375 845" stroke="#fff" />
      <path d="M1432 895Q1434 873 1459 873Q1485 873 1487 895Q1485 918 1459 920Q1434 918 1432 895M1445 876V915M1459 873V920M1475 876V915M1435 905V926M1484 905V926" stroke="#fff" />
    </g>
    <path d="M1157 989L1218 960M1162 989L1224 961M1169 989L1228 962M1176 989L1230 964M1181 989L1234 966M1218 960L1228 960L1233 963V968L1222 967Z" stroke="#ff35ff" strokeWidth="1.300" />

    <g strokeLinecap="round" strokeWidth="6">
      <path d="M56 936L20 911" stroke="#45a945" /><path d="M55 934L20 910" stroke="#86dc84" strokeWidth="2" />
      <path d="M58 937L103 916" stroke="#a34a4a" /><path d="M60 935L102 915" stroke="#d37f7f" strokeWidth="2" />
      <path d="M56 937V892" stroke="#3a62a0" /><path d="M55 936V893" stroke="#5a85c4" strokeWidth="2" />
      <path d="M55 891V893" stroke="#9fd4ff" strokeWidth="3" />
    </g>
    <g fontSize="21" textAnchor="middle" fontFamily="Lato" fontWeight="300">
      <text x="61" y="884" fill="#1066f5">Z</text><text x="107" y="910" fill="#ff2a2a">X</text><text x="21" y="904" fill="#15b015">Y</text>
    </g>

    <g transform="translate(1480 280) scale(0.333333)">
      <ellipse cx="1036" cy="270" rx="181" ry="118" stroke="#474e5a" strokeWidth="42" />
      <g fill="#aeb0b3" fontSize="66" fontWeight="700" textAnchor="middle">
        <text x="930" y="194" fontSize="44" transform="rotate(-28 930 194)">N</text>
        <text x="1168" y="204" fontSize="50" transform="rotate(28 1168 204)">E</text>
        <text x="882" y="362" transform="rotate(-30 882 362)">W</text>
        <text x="1156" y="384" transform="rotate(32 1156 384)">S</text>
      </g>
      <path d="M928 118L1046 67L1146 130L1022 188Z" fill="url(#cubeTop)" />
      <path d="M928 118L1022 188V314L934 240Z" fill="#b0b1b3" />
      <path d="M1022 188L1146 130L1138 250L1022 314Z" fill="#a5a6a8" />
      <path d="M928 118L1022 188L1146 130M1022 188V314" stroke="#33373d" strokeWidth="3" strokeDasharray="24 6" />
      <path d="M1000 172L1022 162L1046 174V192L1022 206L1002 192Z" fill="#8496ad" opacity="0.600" />
      <g fill="#4a4f57" fontWeight="700" textAnchor="middle">
        <text x="1034" y="134" fontSize="32" transform="rotate(-22 1034 134)">TOP</text>
        <text x="0" y="0" fontSize="24" transform="translate(974 225) skewY(36)" fontFamily="Roboto">LEFT</text>
        <text x="0" y="0" fontSize="32" transform="translate(1084 236) skewY(-26)" fontFamily="Roboto">FRONT</text>
      </g>
    </g>
  </Canvas>
);

const WcsButton = styled.button.attrs({ type: "button" })`
  position: absolute;
  top: 211px;
  right: 61px;
  display: flex;
  align-items: center;
  justify-content: space-between;
  width: 57px;
  height: 21px;
  padding: 0 5px;
  border: 1px solid #b9bcc6;
  border-radius: 5px;
  background: #a3a6b2;
  color: #5f636c;
  font: 13px/18px "Liberation Sans", Arial, sans-serif;
`;
const NavBar = styled.nav`
  position: absolute;
  top: 262px;
  right: 3px;
  display: flex;
  flex-direction: column;
  align-items: center;
  gap: 6px;
  width: 40px;
  padding: 18px 0 20px;
  border-radius: 4px;
  background: rgba(120, 123, 127, 0.75);
`;
const NavCorner = styled.i`
  position: absolute;
  right: 2px;
  ${(p) => p.$at}: 2px;
  width: 9px;
  height: 9px;
  border: 2px solid #4d5157;
  border-radius: 5px;
`;
const N = "#4a4e55";
const navIcons = [
  ["Steering wheel", <Ic s={30}><path d="M15 2H28V15A13 13 0 1 1 15 2Z" stroke={N} strokeWidth="1.500" /><circle cx="15" cy="15" r="7.500" stroke={N} strokeWidth="2" /><path d="M5 25L9.500 20.500M25 25L20.500 20.500" stroke={N} /></Ic>],
  ["drop"],
  ["Pan", <Ic s={30}><path d="M10 28Q3 20 1 15Q5 12 9 18L7 6Q10 3 11 7L13 14L13 3Q16 0 17 4L17 14L20 4Q23 3 22 7L21 15L25 9Q29 8 27 12Q26 20 22 28Z" stroke={N} strokeWidth="1.500" /></Ic>],
  ["Zoom", <Ic s={30}><path d="M2 2L19 19M19 2L2 19M1 7V1H7M14 1H20V7M1 14V20H7" stroke={N} strokeWidth="1.800" /><circle cx="21" cy="20" r="6" stroke={N} strokeWidth="2" fill="#63676c" /><path d="M25 25L30 30" stroke={N} strokeWidth="3.500" /></Ic>],
  ["drop"],
  ["Orbit", <Ic s={30}><path d="M15 1L20 8H17.500V28H12.500V8H10Z" stroke={N} strokeWidth="1.500" /><path d="M11 13Q1 14 1 18Q2 22 15 22Q29 22 29 17Q28 13 19 12" stroke={N} strokeWidth="1.800" /><path d="M10 17L4 22L10 26Z" fill={N} /></Ic>],
  ["drop"],
  ["ShowMotion", <Ic s={30}><path d="M1 1H8V8H1ZM11 1H18V8H11ZM22 1H29V8H22ZM1 12H21V28H1Z" stroke={N} strokeWidth="1.500" /><path d="M7 15L16 20L7 25Z" fill={N} /></Ic>],
];

const Dock = styled.div`
  position: absolute;
  left: 20%;
  right: 20%;
  bottom: 1px;
`;
const History = styled.ul`
  display: flex;
  flex-direction: column;
  align-items: flex-start;
  gap: 6px;
  margin: 0 0 6px;
  padding: 0 0 0 530px;
  list-style: none;
`;
const HistoryLine = styled.li`
  padding: 0 2px;
  border-radius: 2px;
  background: rgba(104, 104, 104, ${(p) => p.$o});
  color: ${(p) => p.$c};
  font: 15px/19px "DejaVu Sans Mono", monospace;
  white-space: nowrap;
`;
const CommandRow = styled.div`
  display: flex;
  height: 32px;
`;
const CommandHandle = styled.div`
  display: flex;
  align-items: center;
  gap: 14px;
  width: 70px;
  padding-left: 5px;
  background: #2a303d;
`;
const CommandField = styled.label`
  flex: 1;
  display: flex;
  align-items: center;
  gap: 4px;
  padding: 0 8px 0 5px;
  border-radius: 3px;
  background: rgba(255, 255, 255, 0.71);
`;
const CommandInput = styled.input`
  flex: 1;
  margin-left: 2px;
  color: #333;
  font: 15px/20px "DejaVu Sans Mono", monospace;
  &::placeholder { color: #65676a; font-style: italic; opacity: 1; }
`;

const Model = () => (
  <Viewport>
    <Drawing />
    <ViewHead>
      <ViewLabel>[−][Custom View][Wireframe]</ViewLabel>
      <Cluster $gap={12}>
        <IconButton $w={14} aria-label="Minimize drawing"><Ic w={13} h={12}><path d="M0 10H13" stroke="#eee" strokeWidth="4" /></Ic></IconButton>
        <IconButton $w={13} aria-label="Restore drawing"><Ic w={13} h={13}><path d="M3 1.500H11.500V9" stroke="#eee" strokeWidth="2" /><path d="M1.200 4.500H9V11.500H1.200Z" stroke="#eee" strokeWidth="2.400" /></Ic></IconButton>
        <IconButton $w={12} aria-label="Close drawing"><X c="#eee" /></IconButton>
      </Cluster>
    </ViewHead>
    <WcsButton>WCS<Ic w={10} h={6}><path d="M1 0.500H9L5 5.500Z" stroke="#d4d6de" /></Ic></WcsButton>
    <NavBar>
      <NavCorner $at="top" /><NavCorner $at="bottom" />
      {navIcons.map(([n, ic], i) => (n === "drop" ? <Arrow key={i} $s={3} $c={N} /> : <IconButton key={i} $w={30} $h={34} aria-label={n}>{ic}</IconButton>))}
    </NavBar>
    <Dock>
      <History>
        <HistoryLine $o={0.6} $c="#b4b4b4">Specify rotation angle or [Base point/Copy/Undo/Reference/eXit]: 90</HistoryLine>
        <HistoryLine $o={0.75} $c="#cfcfcf">Command:</HistoryLine>
        <HistoryLine $o={0.9} $c="#f2f2f2">Command:</HistoryLine>
      </History>
      <CommandRow>
        <CommandHandle>
          <Cluster $gap={5}>
            <Ic w={7} h={22}><path d="M1 0V22M5.500 0V22" stroke="#aaa" strokeWidth="2" strokeDasharray="2 2" /></Ic>
            <X s={13} c="#b4b6ba" />
          </Cluster>
          <Ic w={19} h={20}><path d="M2 18L11 8" stroke="#b4b6ba" strokeWidth="3" strokeLinecap="round" /><path d="M17 3L14 6L12 4L15 1Q10 0 9.500 4Q9 10 14 9.500Q19 8 17 3Z" fill="#b4b6ba" /></Ic>
        </CommandHandle>
        <CommandField>
          <Ic w={20} h={17}><path d="M0.500 0.500H19.500V15.500H0.500Z" stroke="#5a5c60" /><path d="M0 0H20V4H0Z" fill="#5a5c60" /><path d="M2 6L5 8.500L2 11M6 11H11" stroke="#5a5c60" /></Ic>
          <Arrow $s={5} $c="#555" />
          <CommandInput aria-label="Command line" placeholder="Type a command" />
          <Ic w={9} h={6}><path d="M0 6L4.500 0L9 6Z" fill="#55575a" /></Ic>
        </CommandField>
      </CommandRow>
    </Dock>
  </Viewport>
);

/* ---------- status bar ---------- */

const StatusBar = styled.footer`
  display: flex;
  align-items: flex-start;
  gap: 3px;
  height: 39px;
  margin: 0 4px;
  padding: 1px 1px 0 17px;
  border-top: 1px solid #4a4f57;
`;
const LayoutTabs = styled.nav`
  display: flex;
  gap: 10px;
`;
const LayoutTab = styled.button.attrs({ type: "button" })`
  width: 68px;
  height: 21px;
  border-radius: 0 0 9px 9px;
  background: ${(p) => (p.$on ? C.panel : "#2d3441")};
  color: ${(p) => (p.$on ? "#fff" : C.dim)};
  font-weight: ${(p) => (p.$on ? 700 : 400)};
  line-height: 19px;
`;
const AddLayout = styled(AddTab)`
  margin: 1px 0 0;
  border-radius: 8px 2px 10px 4px;
`;
const StatusGroup = styled.div`
  display: flex;
  height: 30px;
  background: ${C.panel};
`;
const StatusButton = styled.button.attrs({ type: "button" })`
  display: flex;
  align-items: center;
  justify-content: center;
  gap: 6px;
  width: ${(p) => p.$w || 30}px;
  background: ${(p) => (p.$on ? "#5b8ec4" : "none")};
`;
const Person = ({ c = C.grey, children }) => <Ic s={20}><path d="M9 1L12 11L17 19H12L10.500 16V20H8V16L6 19H1L6 11Z" fill={c} />{children}</Ic>;
const SDrop = ({ w = 21, label }) => <StatusButton $w={w} aria-label={label}><Arrow $s={5} /></StatusButton>;

const Status = () => (
  <StatusBar>
    <LayoutTabs>
      <LayoutTab $on>Model</LayoutTab>
      <LayoutTab>Layout1</LayoutTab>
      <LayoutTab>Layout2</LayoutTab>
      <AddLayout aria-label="New layout"><Plus s={10} /></AddLayout>
    </LayoutTabs>
    <Spacer />
    <StatusGroup><StatusButton $w={59}>MODEL</StatusButton></StatusGroup>
    <StatusGroup>
      <StatusButton $w={29} $on aria-label="Grid"><Ic><path d="M5 0V20M10 0V20M15 0V20M0 5H20M0 10H20M0 15H20" stroke="#fff" strokeWidth="1.300" /></Ic></StatusButton>
      <StatusButton aria-label="Snap"><Ic w={16} h={16}><path d="M2 0V16M8 0V16M14 0V16" stroke="#eee" strokeWidth="3" strokeDasharray="3 3.500" /></Ic></StatusButton>
      <SDrop label="Snap settings" />
    </StatusGroup>
    <Cluster $gap={1}>
      <StatusGroup>
        <StatusButton aria-label="Ortho"><Ic><path d="M1 0V19H20M1 13H7V19" stroke={C.grey} strokeWidth="1.300" /></Ic></StatusButton>
        <StatusButton $w={27} aria-label="Polar"><Ic><circle cx="9" cy="10" r="8" stroke="#b9bcc2" strokeWidth="1.300" /><path d="M9 10H20M9 10L15 3M13 13V7" stroke="#b9bcc2" /></Ic></StatusButton>
        <SDrop w={26} label="Polar settings" />
        <StatusButton $w={24} aria-label="Isoplane"><Ic w={16} h={20}><path d="M1 2L15 18" stroke={C.red} /><path d="M8 0V20" stroke={C.green} /><path d="M5.500 7.500H10.500V12.500H5.500Z" stroke="#aaa" /></Ic></StatusButton>
        <SDrop w={24} label="Isoplane settings" />
      </StatusGroup>
      <StatusGroup>
        <StatusButton aria-label="Object tracking"><Ic><path d="M19 4L1 17H20" stroke={C.grey} strokeWidth="1.300" /><path d="M7 8L11 17" stroke={C.grey} /></Ic></StatusButton>
        <StatusButton $w={28} $on aria-label="Object snap"><Ic><path d="M3 4H18V19H3Z" stroke="#fff" strokeWidth="1.300" /><path d="M0.700 1H6V6H0.700Z" stroke="#fff" fill="#5b8ec4" /></Ic></StatusButton>
        <SDrop label="Object snap settings" />
      </StatusGroup>
    </Cluster>
    <StatusGroup>
      <StatusButton $w={29} $on aria-label="Annotation visibility"><Person c="#fff"><circle cx="17" cy="4" r="3" stroke="#fff" /></Person></StatusButton>
      <StatusButton aria-label="Auto scale"><Person><path d="M17 0L13 5H16L14 10L20 4H17Z" fill={C.grey} /></Person></StatusButton>
      <StatusButton aria-label="Annotation"><Person /></StatusButton>
      <StatusButton $w={43}>1:1<Arrow $s={5} /></StatusButton>
    </StatusGroup>
    <Cluster $gap={1}>
      <StatusGroup><StatusButton $w={29} aria-label="Workspace switching"><Gear /></StatusButton><SDrop label="Workspace list" /></StatusGroup>
      <StatusGroup><StatusButton aria-label="Annotation monitor"><Plus s={19} c={C.grey} /></StatusButton></StatusGroup>
    </Cluster>
    <StatusGroup><StatusButton aria-label="Isolate objects"><Ic><path d="M1 1H8V9H1Z" stroke={C.grey} /><circle cx="16" cy="8" r="4" stroke={C.grey} /><path d="M8.500 13L13 20H4Z" stroke={C.grey} /></Ic></StatusButton></StatusGroup>
    <StatusGroup><StatusButton $w={34} aria-label="Graphics performance"><Ic s={26}><path d="M2 8Q8 -2 20 4L22 14H4Z" fill="#2a6fb8" /><path d="M2 7H14M8 0V14" stroke="#cfe6fa" strokeWidth="1.500" /><path d="M1 15H12V22H1Z" fill="#f5b52a" /><path d="M11 18L16 24L25 12" stroke="#3fae49" strokeWidth="4" /></Ic></StatusButton></StatusGroup>
    <StatusGroup>
      <StatusButton aria-label="Clean screen"><Ic w={20} h={16}><path d="M0.700 0.700H19.300V15.300H0.700Z" stroke={C.grey} strokeWidth="1.300" /><path d="M12 7L16 3M13 3H16V6M8 9L4 13M4 10V13H7" stroke={C.grey} strokeWidth="1.300" /></Ic></StatusButton>
      <StatusButton aria-label="Customization"><Ic w={20} h={18}><path d="M0 1.500H20M0 9H20M0 16.500H20" stroke={C.grey} strokeWidth="2.200" /></Ic></StatusButton>
    </StatusGroup>
  </StatusBar>
);

/* ---------- taskbar ---------- */

const Taskbar = styled.footer`
  display: flex;
  height: 50px;
  background: linear-gradient(90deg, #22383f 0%, #21353e 40%, #1c2b42 70%, #1b2746 100%);
`;
const Task = styled.button.attrs({ type: "button" })`
  display: flex;
  align-items: center;
  justify-content: center;
  width: ${(p) => p.$w || 62}px;
  background: ${(p) => (p.$on ? "#50626a" : "none")};
  background-clip: padding-box;
  border: solid transparent;
  border-width: 0 ${(p) => (p.$on ? 0 : 5)}px;
  ${(p) => p.$open && css`
    padding-top: 3px;
    &::after { content: ""; align-self: flex-end; height: 3px; width: 100%; margin-left: -100%; background: #76b9ed; }
  `}
  & > svg { margin: auto; }
`;
const TaskStack = styled.span`
  display: flex;
  align-items: center;
  justify-content: center;
  width: 100%;
  flex: none;
`;
const Weather = styled.button.attrs({ type: "button" })`
  display: flex;
  align-items: center;
  gap: 9px;
  margin-right: 23px;
  font-size: 17px;
  white-space: pre;
`;
const Tray = styled.div`
  display: flex;
  align-items: center;
  gap: 12px;
`;
const Clock = styled.button.attrs({ type: "button" })`
  display: flex;
  flex-direction: column;
  align-items: center;
  justify-content: center;
  gap: 3px;
  width: 68px;
  margin: 0 22px 0 17px;
`;
const Notice = styled.button.attrs({ type: "button" })`
  margin-right: 16px;
`;
const ShowDesktop = styled.button.attrs({ type: "button" })`
  width: 6px;
  border-left: 1px solid #5b6577;
`;

const tasks = [
  ["Start", 61, 0, <Ic><path d="M0 3L8.500 1.800V9.500H0ZM9.500 1.600L20 0V9.500H9.500ZM0 10.500H8.500V18.200L0 17ZM9.500 10.500H20V20L9.500 18.400Z" fill="#fff" /></Ic>],
  ["Search", 62, 0, <Ic><circle cx="13" cy="7" r="6.500" stroke="#fff" strokeWidth="1.500" /><path d="M8 12L0.500 19.500" stroke="#fff" strokeWidth="1.500" /></Ic>],
  ["Edge", 62, 0, <Ic s={30}><circle cx="15" cy="15" r="15" fill="#1273c9" /><path d="M0.500 12Q4 0 16 0Q29 1 30 13Q29 20 21 20Q17 19 19 15Q19 8 11 8Q4 8 0.500 12Z" fill="#2fc6d0" /><path d="M18 0.500Q29 2 30 13Q29 20 21 20Q17 19 19 15Q22 8 12 3Z" fill="#5bd96b" opacity="0.750" /><path d="M0.500 13Q4 8 11 8Q6 15 11 22Q16 28 25 25Q20 31 12 30Q0 27 0.500 13Z" fill="#1683dc" /><path d="M12 12Q9 20 16 23Q21 25 26 22Q23 28 16 27Q6 24 12 12Z" fill="#0c4f94" /></Ic>],
  ["Command Prompt", 62, 0, <Ic w={28} h={23}><path d="M0.500 0.500H27.500V22.500H0.500Z" fill="#000" stroke="#c9c9c9" /><path d="M1 1H27V4H1Z" fill="#9a9a9a" /><path d="M1 4H27Q12 6 1 16Z" fill="#3c3c3c" /><path d="M3 6V9M6 6V7M8 6L10 9M11 9H17" stroke="#eee" /></Ic>],
  ["File Explorer", 62, 1, <Ic w={28} h={24}><path d="M0 0H10L13 3H28V22H0Z" fill="#e8a30c" /><path d="M0 5H28V23H0Z" fill="#ffd768" /><path d="M5 24V13H23V24H18V18H10V24Z" fill="#3e97df" /></Ic>],
  ["Ubuntu", 62, 0, <Ic s={30}><path d="M0 0H30V30H0Z" fill="#fff" /><circle cx="15" cy="15" r="15" fill="#e95420" /><circle cx="15" cy="15" r="7" stroke="#fff" strokeWidth="3" /><g fill="#fff" stroke="#e95420" strokeWidth="1.300"><circle cx="5.500" cy="15" r="3.200" /><circle cx="19.700" cy="6.700" r="3.200" /><circle cx="19.700" cy="23.300" r="3.200" /></g></Ic>],
  ["Teams", 62, 1, <Ic s={30}><circle cx="17" cy="5" r="5" fill="#7b83eb" /><circle cx="25" cy="7" r="3.500" fill="#5059c9" /><path d="M20 12H29V20Q28 25 22 25Z" fill="#5059c9" /><path d="M9 12H23V22Q21 28 15 28Q9 27 9 22Z" fill="#7b83eb" /><path d="M0 7H15V22H0Z" fill="#4b53bc" /><text x="7.500" y="19" fontSize="13" fontWeight="700" fill="#fff" textAnchor="middle">T</text><circle cx="24" cy="24" r="6.500" fill="#7fba00" stroke="#fff" /><path d="M21 24L23.500 26.500L27.500 21.500" stroke="#fff" strokeWidth="1.700" /></Ic>],
  ["Chrome", 62, 1, <Ic s={28}><circle cx="14" cy="14" r="14" fill="#2ba24c" /><path d="M14 14L2 6.500Q6 0 14 0Q22 0 26.500 7.500H14Z" fill="#e33b2e" /><path d="M14 14L26.500 7.500Q30 15 26 21Q22 28 13 28Z" fill="#fbc116" /><circle cx="14" cy="14" r="6.500" fill="#fff" /><circle cx="14" cy="14" r="5" fill="#2f7de9" /></Ic>],
  ["Word", 62, 1, <Ic s={28}><path d="M5 0H28V27H5Z" fill="#e9f2fb" /><path d="M0 2L22 0V22L0 27Z" fill="#d3e6f8" /><text x="12" y="19" fontSize="20" fontWeight="700" fill="#1c56a8" textAnchor="middle">W</text><path d="M17 15L28 18V27H15Z" fill="#fff" stroke="#9cb8d8" /></Ic>],
  ["AutoCAD", 62, 2, <Ic s={30}><path d="M0 0H30V30H0Z" fill="#fbe9e2" /><g transform="translate(5 3) scale(1.100 1.200)"><path d="M7 0H12L18 19H14L12 14H6L4 19H0ZM9 4L7 11H12Z" fill="#c4262e" fillRule="evenodd" /><path d="M7 0L0 19H4L6 14L12 11H7L9 4Z" fill="#8f1720" /></g></Ic>],
  ["Photos", 62, 1, <Ic s={28}><path d="M0 0H28V28H0Z" fill="#2ba4ea" /><path d="M20 14L28 4V28H18Z" fill="#7f8fe6" /><path d="M0 20L9 9L26 28H0Z" fill="#164a8c" /><path d="M14 15L20 11L28 22V28H26Z" fill="#2b66b8" /><circle cx="18" cy="6" r="2.700" fill="#fff" /></Ic>],
];

const Tasks = () => (
  <Taskbar>
    {tasks.map(([n, w, st, ic]) => (
      <Task key={n} $w={w} $on={st === 2} $open={st > 0} aria-label={n}>{st ? <TaskStack>{ic}</TaskStack> : ic}</Task>
    ))}
    <Spacer />
    <Weather><Ic w={28} h={19}><circle cx="13" cy="8" r="8" fill="#cfe6fb" /><circle cx="7" cy="12" r="7" fill="#e6f2fd" /><circle cx="21" cy="12" r="7" fill="#a9d2f8" /><path d="M7 10H21V19H7Z" fill="#c3e0fa" /></Ic>{"42°F  Cloudy"}</Weather>
    <Tray>
      <Ic w={15} h={9}><path d="M0.500 8.500L7.500 1L14.500 8.500" stroke="#fff" strokeWidth="1.300" /></Ic>
      <Ic w={20} h={14}><path d="M5 2.500H18V12.500H5Z" fill="#fff" stroke="#fff" /><path d="M19 5V10" stroke="#fff" strokeWidth="2" /><path d="M0 2H6V6H0ZM2 0V2M5 0V2M3 6V12H5" stroke="#fff" fill="#1c2b42" /></Ic>
      <Ic w={16} h={16}><g stroke="#dfe4ea" strokeWidth="1.300"><path d="M1 15A14 14 0 0 1 15 1" /><path d="M5 15A10 10 0 0 1 15 5" /><path d="M9 15A6 6 0 0 1 15 9" /></g><circle cx="14" cy="14" r="1.800" fill="#fff" /></Ic>
      <Ic w={20} h={16}><path d="M0.700 5H4L9 1V15L4 11H0.700Z" stroke="#fff" strokeWidth="1.200" /><path d="M11.500 5Q13.500 8 11.500 11M14 3Q17.500 8 14 13" stroke="#fff" /><path d="M17 1Q21 8 17 15" stroke="#8993a3" /></Ic>
      <Ic w={20} h={20}><path d="M14 1L17 3L9 15L5 18L6 13ZM6 12Q-1 13 1 16Q4 19 10 14T19 10" stroke="#fff" strokeWidth="1.300" /></Ic>
    </Tray>
    <Cluster $ml={17}><span>ROU</span></Cluster>
    <Clock><span>2:51 PM</span><span>4/18/2022</span></Clock>
    <Notice aria-label="Notifications">
      <Ic w={30} h={30}><path d="M0 0H20V16H11L8 20V16H0Z" fill="#fff" transform="translate(0 2)" /><path d="M4 6.500H16M4 10H16M4 13.500H12" stroke="#1b2746" strokeWidth="1.300" /><circle cx="19" cy="21" r="9.500" fill="#2f3338" stroke="#9a9fa6" /><text x="19" y="26.500" fontSize="15" textAnchor="middle" fill="#fff">1</text></Ic>
    </Notice>
    <ShowDesktop aria-label="Show desktop" />
  </Taskbar>
);

export default function App() {
  return (
    <Desktop>
      <Global />
      <Window>
        <Title />
        <RibbonBar />
        <FileTabs>
          <FileTab $w={154} $pl={21}><TabName>Start</TabName></FileTab>
          <FileTab $w={153} $on $pr={11} $pl={17}><TabName $on>bici*</TabName><IconButton $w={12} aria-label="Close bici"><X /></IconButton></FileTab>
          <FileTab $w={181} $pl={14} $pr={11}><TabName>PROIECTULCURENT*</TabName><IconButton $w={12} aria-label="Close PROIECTULCURENT"><X /></IconButton></FileTab>
          <AddTab aria-label="New drawing"><Plus /></AddTab>
        </FileTabs>
        <Rule />
        <Model />
        <Status />
      </Window>
      <Tasks />
    </Desktop>
  );
}
